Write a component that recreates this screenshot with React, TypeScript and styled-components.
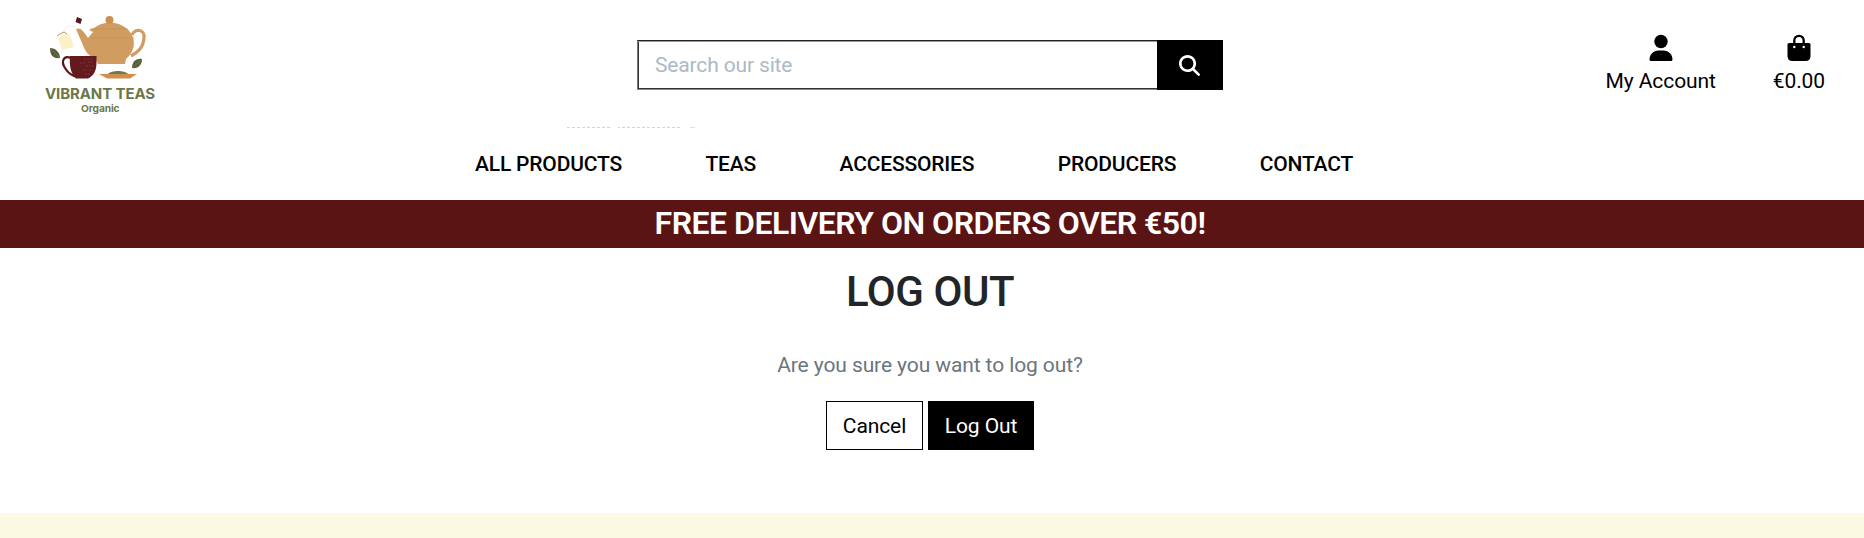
import React from "react";
import styled, { createGlobalStyle } from "styled-components";

const GlobalStyle = createGlobalStyle`
  *, *::before, *::after { box-sizing: border-box; }
  html, body { margin: 0; padding: 0; background: #fff; }
  body { font-family: Roboto, "Liberation Sans", sans-serif; font-size: 21px; line-height: 1.5; letter-spacing: -0.1px; color: #212529; overflow: hidden; }
  a { color: inherit; text-decoration: none; }
`;

const Page = styled.div`
  height: 538px;
  display: flex;
  flex-direction: column;
`;

const TopBar = styled.header`
  height: 127px;
  flex: none;
  display: grid;
  grid-template-columns: 637px 586px 1fr;
`;

const LogoLink = styled.a`
  padding: 10px 0 0 40px;
  svg { display: block; }
`;

const SearchForm = styled.form`
  display: flex;
  height: 50px;
  margin: 40px 0 0;
`;

const SearchInput = styled.input`
  flex: 1;
  min-width: 0;
  height: 50px;
  border: 1px solid #222;
  border-left-color: #777;
  border-bottom-color: #888;
  border-right: 0;
  border-radius: 0;
  box-shadow: inset 0 1px #999, inset 1px -1px #333;
  padding: 0 0 0 17px;
  font: inherit;
  letter-spacing: -0.15px;
  outline: none;
  background: #fff;
  &::placeholder { color: #adb9c6; opacity: 1; }
`;

const SearchButton = styled.button`
  width: 66px;
  border: 0;
  padding: 0 2px 0 0;
  background: #000;
  color: #fff;
  display: flex;
  align-items: center;
  justify-content: center;
`;

const UserLinks = styled.nav`
  display: flex;
  justify-content: flex-end;
  align-items: flex-start;
  gap: 57px;
  padding: 34px 39px 0 0;
`;

const UserLink = styled.a`
  display: flex;
  flex-direction: column;
  align-items: center;
  color: #000;
  svg { display: block; height: 28px; }
  span { line-height: 32px; margin-top: 3px; }
`;

const HiddenMessageEdge = styled.div`
  flex: none;
  height: 1px;
  width: 129px;
  margin-left: 567px;
  background:
    linear-gradient(90deg, transparent 0 45px, #fff 45px 51px, transparent 51px 115px, #fff 115px 123px, #f8d4d0 123px 128px, #fff 128px),
    repeating-linear-gradient(90deg, #d4d4d4 0 3px, #fff 3px 5px);
`;

const MainNav = styled.nav`
  flex: none;
  height: 72px;
  display: flex;
  gap: 83.5px;
  padding: 21px 0 0 475px;
  font-weight: 550;
  letter-spacing: -0.18px;
  color: #000;
  white-space: nowrap;
`;

const Banner = styled.div`
  flex: none;
  height: 48px;
  padding-right: 4px;
  background: #5b1414;
  color: #fff;
  text-align: center;
  font-size: 32px;
  font-weight: 600;
  letter-spacing: -0.5px;
  line-height: 46px;
`;

const Main = styled.main`
  flex: 1;
  display: flex;
  flex-direction: column;
  align-items: center;
  padding-right: 4px;
`;

const Title = styled.h1`
  margin: 19px 0 0;
  font-size: 42px;
  font-weight: 550;
  letter-spacing: -0.45px;
  line-height: 50px;
`;

const Question = styled.p`
  margin: 32px 0 0;
  line-height: 32px;
  color: #6c757d;
`;

const Actions = styled.div`
  display: flex;
  gap: 5px;
  margin-top: 20px;
`;

const Button = styled.button<{ $solid?: boolean }>`
  height: 49px;
  width: ${(p) => (p.$solid ? 106 : 97)}px;
  padding: 2px 0 0;
  border: 1px solid #000;
  border-radius: 0;
  background: ${(p) => (p.$solid ? "#000" : "#fff")};
  color: ${(p) => (p.$solid ? "#fff" : "#000")};
  font: inherit;
  letter-spacing: -0.1px;
`;

const Footer = styled.footer`
  flex: none;
  height: 25px;
  background: #fcf9e2;
`;

const Logo = () => (
  <svg width="120" height="110" viewBox="0 0 120 110" role="img">
    <path d="M92 25 C95 18 105 19 104 28 C103 38 98 42 91 46" fill="none" stroke="#d19c60" strokeWidth="3.2" />
    <path d="M36 19 C40 17 43 20 48 28 L53 22 L49 20 L54 18 C62 11 78 11 86 18 C98 27 95 42 86 49 L85 54 H58 L55 48 C48 46 45 41 42 33 Z" fill="#d19c60" />
    <circle cx="69.500" cy="10" r="4" fill="#d08e4e" />
    <path d="M50 19H88M50 28H94" stroke="#c58f54" strokeWidth=".6" />
    <path d="M37 7 l5 2 -1.500 5 -5-2z" fill="#5b1418" />
    <path d="M35 17 C28 14 24 18 24 22" stroke="#f4efdb" fill="none" />
    <path d="M18 28 l6-4 6 1 4 12 -12 3z" fill="#fbf1c9" />
    <path d="M17 26 l3-2 4-2 3 2" stroke="#b59a5e" fill="none" />
    <path d="M10 38 C16 38 20 43 20 48 C13 49 10 45 10 38Z" fill="#565f38" />
    <path d="M10 38 L20 48" stroke="#81886c" strokeWidth=".5" />
    <path d="M102 49 C96 48 92 52 92 58 C98 59 102 55 102 49Z" fill="#565f38" />
    <path d="M102 49 L92 58" stroke="#81886c" strokeWidth=".5" />
    <path d="M31 48 C23 45 21 52 25 58 C28 63 31 66 38 67" stroke="#5b1418" strokeWidth="2.200" fill="none" />
    <path d="M30 46 H56.500 V54 C56 62 53 66 48 68.500 H36 C31 64 29 56 30 46Z" fill="#64191c" />
    <path d="M44 49h9M40 53h5M48 52h6M46 56h8M43 60h4M49 60h4M45 64h5" stroke="#844344" strokeWidth=".7" strokeDasharray="2 1" />
    <path d="M68 64 C71 60 85 60 88 64Z" fill="#6d7c4b" />
    <path d="M59 64 H97 L90 68.500 H67Z" fill="#d18e4c" />
    <text x="5" y="88.500" textLength="110" lengthAdjust="spacingAndGlyphs" fontFamily="Inter, sans-serif" fontSize="14.500" fontWeight="700" fill="#6b7748">VIBRANT TEAS</text>
    <text x="41" y="101.500" textLength="38.500" lengthAdjust="spacingAndGlyphs" fontFamily="Inter, sans-serif" fontSize="9.500" fontWeight="700" fill="#6b7748">Organic</text>
  </svg>
);

const SearchIcon = () => (
  <svg width="21" height="21" viewBox="0 0 512 512" fill="currentColor">
    <path d="M416 208c0 45.900-14.900 88.300-40 122.700L502.600 457.400c12.500 12.500 12.500 32.800 0 45.300s-32.800 12.500-45.300 0L330.700 376c-34.400 25.200-76.800 40-122.700 40C93.100 416 0 322.900 0 208S93.100 0 208 0S416 93.100 416 208zM208 352a144 144 0 1 0 0-288 144 144 0 1 0 0 288z" />
  </svg>
);

const UserIcon = () => (
  <svg width="24" height="28" viewBox="0 0 24 28">
    <circle cx="12" cy="7.500" r="6.700" fill="#000" />
    <path d="M.5 25.500C.5 20.500 4.500 16.500 9.500 16.500h5c5 0 9 4 9 9 0 .9-.6 1.500-1.500 1.500H2c-.9 0-1.500-.6-1.500-1.500z" fill="#000" />
  </svg>
);

const BagIcon = () => (
  <svg width="24" height="28" viewBox="0 0 24 28">
    <path d="M7.300 12V6.500a4.700 4.700 0 0 1 9.400 0V12" fill="none" stroke="#000" strokeWidth="2.300" />
    <path d="M2 9h20q1.500 0 1.500 1.500V22q0 5-5 5h-13q-5 0-5-5V10.500Q.5 9 2 9z" fill="#000" />
    <circle cx="7.300" cy="13" r="1.200" fill="#fff" />
    <circle cx="16.700" cy="13" r="1.200" fill="#fff" />
  </svg>
);

const navItems = ["ALL PRODUCTS", "TEAS", "ACCESSORIES", "PRODUCERS", "CONTACT"];

export default function App() {
  return (
    <Page>
      <GlobalStyle />
      <TopBar>
        <LogoLink href="#"><Logo /></LogoLink>
        <SearchForm>
          <SearchInput placeholder="Search our site" />
          <SearchButton type="button" aria-label="Search"><SearchIcon /></SearchButton>
        </SearchForm>
        <UserLinks>
          <UserLink href="#"><UserIcon /><span>My Account</span></UserLink>
          <UserLink href="#"><BagIcon /><span>€0.00</span></UserLink>
        </UserLinks>
      </TopBar>
      <HiddenMessageEdge />
      <MainNav>
        {navItems.map((item) => <a href="#" key={item}>{item}</a>)}
      </MainNav>
      <Banner>FREE DELIVERY ON ORDERS OVER €50!</Banner>
      <Main>
        <Title>LOG OUT</Title>
        <Question>Are you sure you want to log out?</Question>
        <Actions>
          <Button type="button">Cancel</Button>
          <Button type="button" $solid>Log Out</Button>
        </Actions>
      </Main>
      <Footer />
    </Page>
  );
}
